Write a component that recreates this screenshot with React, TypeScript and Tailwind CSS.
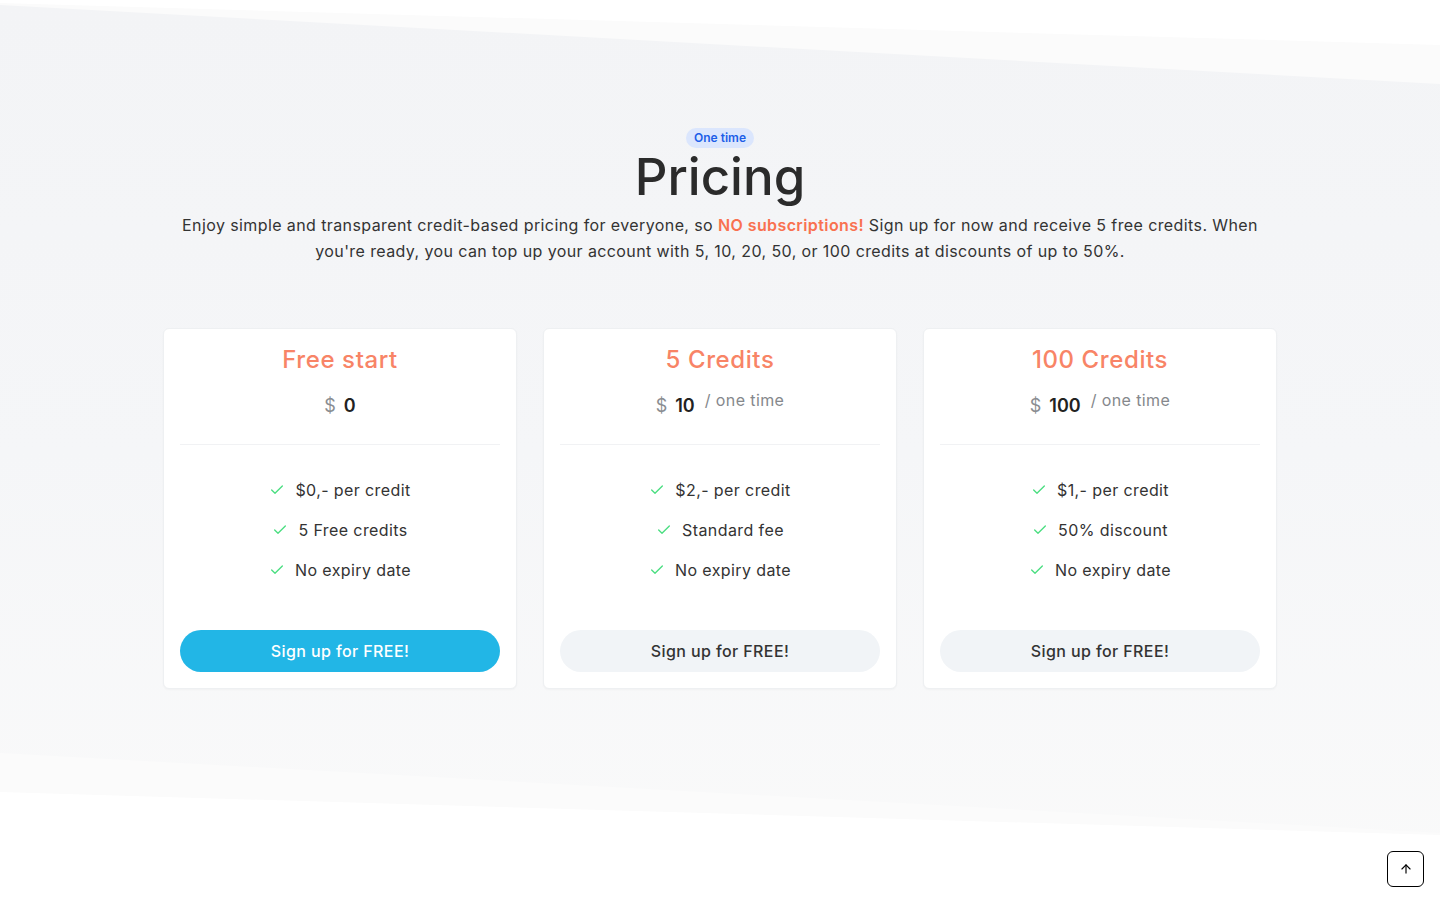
import { ArrowUp, Check } from "lucide-react"

type Plan = {
  title: string
  price: string
  oneTime: boolean
  features: string[]
  primary: boolean
}

const plans: Plan[] = [
  { title: "Free start", price: "0", oneTime: false, features: ["$0,- per credit", "5 Free credits", "No expiry date"], primary: true },
  { title: "5 Credits", price: "10", oneTime: true, features: ["$2,- per credit", "Standard fee", "No expiry date"], primary: false },
  { title: "100 Credits", price: "100", oneTime: true, features: ["$1,- per credit", "50% discount", "No expiry date"], primary: false },
]

function PlanCard({ plan }: { plan: Plan }) {
  return (
    <div className="flex flex-col rounded-md border border-[#eef0f2] bg-white px-4 pt-[15px] pb-4 shadow-[0_1px_2px_rgba(0,0,0,0.03)]">
      <h3 className="text-center text-2xl leading-8 font-medium tracking-wide text-[#f88466]">{plan.title}</h3>
      <div className="mt-4 flex h-7 items-center justify-center">
        <span className="text-lg text-[#8a8d91]">$</span>
        <span className="ml-2 text-lg font-semibold text-[#222]">{plan.price}</span>
        {plan.oneTime && (
          <span className="ml-2.5 -mt-3 text-base tracking-wide text-[#85888c]">/ one time</span>
        )}
      </div>
      <div className="mt-6 h-px bg-[#f1f2f4]" />
      <ul className="mt-[33px] flex flex-col gap-4">
        {plan.features.map((f) => (
          <li key={f} className="flex items-center justify-center gap-2.5 text-base leading-6 tracking-wide text-[#333]">
            <Check className="h-4 w-4 text-[#4ade80]" strokeWidth={2} />
            {f}
          </li>
        ))}
      </ul>
      <button
        className={
          plan.primary
            ? "mt-12 h-[42px] w-full rounded-full bg-[#22b6e6] text-base font-medium tracking-wide text-white"
            : "mt-12 h-[42px] w-full rounded-full bg-[#f1f4f7] text-base font-medium tracking-wide text-[#333]"
        }
      >
        Sign up for FREE!
      </button>
    </div>
  )
}

export default function App() {
  return (
    <div className="relative min-h-screen overflow-hidden bg-white font-['Inter','Liberation_Sans',sans-serif]">
      <div className="absolute inset-0 bg-[#fbfbfb] [clip-path:polygon(0_3px,100%_45px,100%_835px,0_792px)]" />
      <div className="absolute inset-0 bg-gradient-to-b from-[#f3f4f6] via-[#f5f6f8] to-[#fafafa] [clip-path:polygon(0_5px,100%_84px,100%_833px,0_753px)]" />

      <section className="relative flex flex-col items-center pt-[128px]">
        <span className="flex h-5 items-center rounded-full bg-[#dbe6fd] px-2 text-xs font-semibold text-[#1d5ee8]">
          One time
        </span>
        <h1 className="mt-[1px] text-[51px] leading-[55px] font-medium text-[#2b2b2b]">Pricing</h1>
        <p className="mt-2 max-w-[1090px] text-center text-base leading-[26px] tracking-wide text-[#333]">
          Enjoy simple and transparent credit-based pricing for everyone, so{" "}
          <span className="font-semibold text-[#f97150]">NO subscriptions!</span> Sign up for now and receive 5 free
          credits. When you're ready, you can top up your account with 5, 10, 20, 50, or 100 credits at discounts of up
          to 50%.
        </p>

        <div className="mt-16 grid w-[1114px] grid-cols-3 gap-[26px]">
          {plans.map((p) => (
            <PlanCard key={p.title} plan={p} />
          ))}
        </div>
      </section>

      <button className="fixed right-4 bottom-[13px] flex h-9 w-[37px] items-center justify-center rounded-md border border-black bg-white">
        <ArrowUp className="h-3.5 w-3.5 text-black" strokeWidth={2} />
      </button>
    </div>
  )
}
